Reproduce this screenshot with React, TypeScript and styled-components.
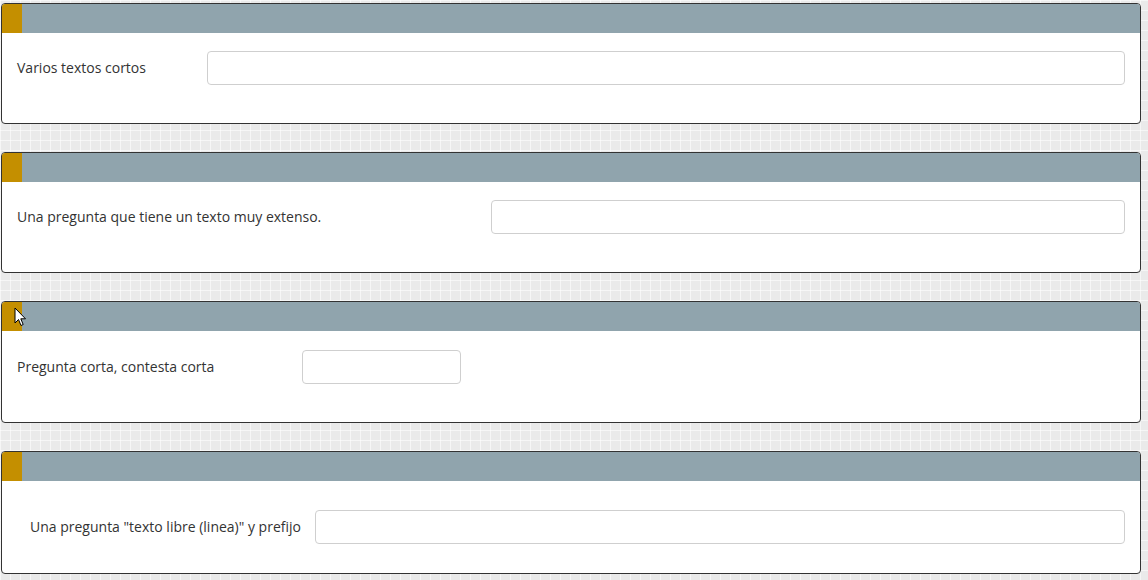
import { FC } from "react";
import styled, { createGlobalStyle } from "styled-components";

const GlobalStyle = createGlobalStyle`
  html, body {
    margin: 0;
    padding: 0;
  }
  body {
    font-family: "Open Sans", "Liberation Sans", sans-serif;
    color: #333;
    background-color: #eaeaea;
    background-image:
      linear-gradient(to right, rgba(255, 255, 255, 0.55) 1px, transparent 1px),
      linear-gradient(to bottom, rgba(255, 255, 255, 0.55) 1px, transparent 1px);
    background-size: 10px 10px;
  }
`;

const Page = styled.div`
  display: flex;
  flex-direction: column;
  gap: 28px;
  padding: 3px 7px 0 1px;
`;

const Card = styled.section`
  position: relative;
  background: #fff;
  border: 1px solid #333;
  border-radius: 4px;
  overflow: hidden;
`;

const Header = styled.div`
  display: flex;
  height: 29px;
  background: #90a4ad;
`;

const Marker = styled.div`
  width: 20px;
  background: #c48f00;
`;

const Body = styled.div<{ $pad: string }>`
  display: flex;
  align-items: center;
  padding: ${(p) => p.$pad};
`;

const Label = styled.label<{ $width?: number; $indent?: number }>`
  box-sizing: border-box;
  flex: 0 0 ${(p) => (p.$width ? `${p.$width}px` : "auto")};
  padding-left: ${(p) => p.$indent ?? 15}px;
  padding-right: ${(p) => (p.$width ? 0 : 14)}px;
  padding-bottom: 2px;
  font-size: 14px;
  line-height: 19px;
  color: #333;
`;

const Field = styled.input<{ $width?: number }>`
  box-sizing: border-box;
  min-width: 0;
  height: 34px;
  width: ${(p) => (p.$width ? `${p.$width}px` : "auto")};
  flex: ${(p) => (p.$width ? `0 0 ${p.$width}px` : "1 1 auto")};
  border: 1px solid #cfcfcf;
  border-radius: 4px;
  background: #fff;
  font: inherit;
  outline: none;
`;

const Cursor = styled.svg`
  position: absolute;
  left: 12px;
  top: 5px;
`;

type Question = {
  text: string;
  labelWidth?: number;
  fieldWidth?: number;
  indent?: number;
  pad: string;
  pointer?: boolean;
};

const questions: Question[] = [
  { text: "Varios textos cortos", labelWidth: 205, pad: "18px 15px 38px 0" },
  { text: "Una pregunta que tiene un texto muy extenso.", labelWidth: 489, pad: "18px 15px 38px 0" },
  { text: "Pregunta corta, contesta corta", labelWidth: 300, fieldWidth: 159, pad: "19px 15px 38px 0", pointer: true },
  { text: 'Una pregunta "texto libre (linea)" y prefijo', indent: 28, pad: "29px 15px 29px 0" },
];

const App: FC = () => {
  return (
    <>
      <GlobalStyle />
      <Page>
        {questions.map((q, i) => (
          <Card key={i}>
            <Header>
              <Marker />
            </Header>
            <Body $pad={q.pad}>
              <Label $width={q.labelWidth} $indent={q.indent}>
                {q.text}
              </Label>
              <Field type="text" $width={q.fieldWidth} />
            </Body>
            {q.pointer && (
              <Cursor width="13" height="20" viewBox="0 0 13 20">
                <path
                  d="M1 1 L1 16 L4.5 12.5 L7 18.5 L9.2 17.5 L6.8 11.8 L11.5 11.8 Z"
                  fill="#fff"
                  stroke="#000"
                  strokeWidth="1"
                  strokeLinejoin="round"
                />
              </Cursor>
            )}
          </Card>
        ))}
      </Page>
    </>
  );
};

export default App;
